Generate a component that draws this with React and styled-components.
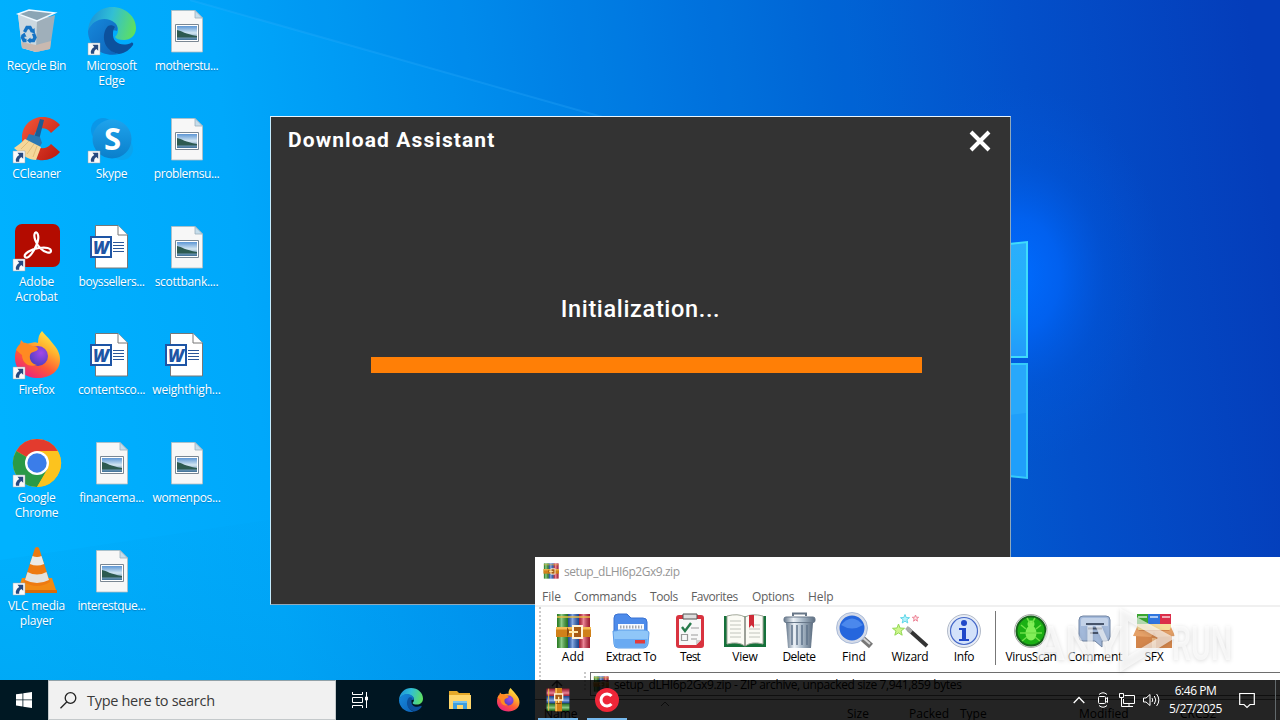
import React from 'react';
import styled, { createGlobalStyle } from 'styled-components';

const GlobalStyle = createGlobalStyle`
  * {
    box-sizing: border-box;
  }

  body {
    margin: 0;
    overflow: hidden;
    font-family: 'Open Sans', 'Noto Sans', sans-serif;
    font-size: 12px;
  }

  svg {
    display: block;
    flex-shrink: 0;
  }
`;

const Screen = styled.div`
  position: relative;
  width: 1280px;
  height: 720px;
  overflow: hidden;
  background: #0078d7;
`;

const Wallpaper = styled.svg`
  position: absolute;
  inset: 0;
`;

const IconGrid = styled.div`
  position: relative;
  display: grid;
  grid-auto-flow: column;
  grid-template-rows: repeat(6, 108px);
  grid-auto-columns: 75px;
  width: 225px;
  margin-left: -1px;
`;

const Shortcut = styled.div`
  display: flex;
  flex-direction: column;
  align-items: center;
  padding-top: 7px;
  color: #fff;
  text-align: center;
`;

const ShortcutLabel = styled.div`
  width: 74px;
  margin-top: 3px;
  line-height: 15px;
  letter-spacing: ${(props) => props.$spacing}px;
  white-space: nowrap;
  text-shadow: 0 1px 1px rgba(0, 40, 90, 0.3);
`;

const Dialog = styled.section`
  position: absolute;
  left: 270px;
  top: 116px;
  width: 741px;
  height: 489px;
  display: flex;
  flex-direction: column;
  align-items: center;
  background: #333;
  border: 1px solid #8fa9bb;
  border-top-color: #e9f6ff;
  border-left-color: #c5ecff;
  font-family: Roboto, sans-serif;
  color: #fff;
`;

const DialogHead = styled.header`
  width: 100%;
  height: 48px;
  padding: 0 19px 0 17px;
  display: flex;
  align-items: center;
  justify-content: space-between;
`;

const DialogTitle = styled.h1`
  margin: 0 0 2px;
  font-size: 21px;
  font-weight: 700;
  letter-spacing: 1.1px;
`;

const Status = styled.div`
  margin-top: 128px;
  height: 32px;
  line-height: 32px;
  font-size: 23.5px;
  font-weight: 500;
  letter-spacing: 0.65px;
`;

const Progress = styled.div`
  margin: 32px 0 0 12px;
  width: 551px;
  height: 16px;
  background: #ff7f06;
`;

const Archive = styled.section`
  position: absolute;
  left: 535px;
  top: 557px;
  width: 745px;
  height: 163px;
  overflow: hidden;
  background: #fff;
`;

const ArchiveTitle = styled.div`
  display: flex;
  align-items: center;
  gap: 5px;
  height: 30px;
  padding: 0 0 2px 8px;
  color: #969696;
  letter-spacing: -0.45px;
`;

const MenuBar = styled.div`
  display: flex;
  align-items: center;
  height: 20px;
  padding-left: 7px;
  color: #606060;
  border-bottom: 2px solid #f0f0f0;
`;

const MenuItem = styled.span`
  width: ${(props) => props.$w}px;
  letter-spacing: ${(props) => props.$spacing}px;
`;

const Toolbar = styled.div`
  display: flex;
  height: 65px;
  padding-left: 4px;
`;

const Grip = styled.div`
  width: 2px;
  height: ${(props) => props.$h}px;
  margin-right: ${(props) => props.$gap || 0}px;
  background: repeating-linear-gradient(#c9c9c9 0 2px, #fff 2px 4px);
`;

const Tool = styled.div`
  display: flex;
  flex-direction: column;
  align-items: center;
  width: ${(props) => props.$w}px;
  padding-top: 6px;
  color: #000;
  line-height: 16px;
  white-space: nowrap;
  letter-spacing: ${(props) => props.$spacing}px;
`;

const Divider = styled.div`
  width: 1px;
  height: 54px;
  margin: 4px 5px 0;
  background: #777;
`;

const AddressRow = styled.div`
  display: flex;
  height: 24px;
  padding-left: 15px;
`;

const Address = styled.div`
  flex: 1;
  display: flex;
  align-items: center;
  gap: 5px;
  margin-left: 4px;
  padding-left: 2px;
  border: 1px solid #6e6e6e;
  border-right: 0;
  color: #000;
  letter-spacing: -0.37px;
`;

const UpArrow = styled.svg`
  margin: 7px 20px 0 0;
`;

const Columns = styled.div`
  display: flex;
  align-items: center;
  position: relative;
  height: 24px;
  margin-top: 3px;
  padding: 4px 0 0 9px;
  border-top: 1px solid #777;
  color: #000;
  line-height: 16px;
`;

const Column = styled.span`
  width: ${(props) => props.$w}px;
  flex-shrink: 0;
`;

const SortMark = styled.svg`
  position: absolute;
  left: 125px;
  top: 1px;
`;

const Watermark = styled.svg`
  position: absolute;
  left: 1030px;
  top: 600px;
  filter: drop-shadow(0 1px 2px rgba(0, 0, 0, 0.22));
`;

const Taskbar = styled.footer`
  position: absolute;
  left: 0;
  top: 680px;
  width: 1280px;
  height: 40px;
  display: flex;
  background: rgba(0, 0, 0, 0.86);
  color: #fff;
`;

const StartButton = styled.div`
  width: 48px;
  display: flex;
  align-items: center;
  justify-content: center;
`;

const SearchBox = styled.div`
  width: 288px;
  display: flex;
  align-items: center;
  gap: 10px;
  padding-left: 11px;
  background: #f1f1f1;
  border: 1px solid #c4c9cb;
  border-top-color: #91a1a8;
  color: #3a3a3a;
  font-size: 14.5px;
  letter-spacing: -0.3px;
`;

const TaskButton = styled.div`
  width: ${(props) => props.$w}px;
  height: 40px;
  display: flex;
  align-items: center;
  justify-content: center;
  box-shadow: ${(props) => (props.$running ? 'inset 0 -2px #76b9ed' : 'none')};
  margin: ${(props) => (props.$running ? '0 5px 0 4px' : 0)};
`;

const Tray = styled.div`
  flex: 1;
  display: flex;
  align-items: center;
  justify-content: flex-end;
`;

const TrayIcon = styled.div`
  width: ${(props) => props.$w}px;
  display: flex;
  justify-content: center;
`;

const Clock = styled.div`
  width: 65px;
  text-align: center;
  line-height: 18px;
  letter-spacing: -0.45px;
`;

const ShowDesktop = styled.div`
  width: 5px;
  height: 40px;
  margin-left: 9px;
  border-left: 1px solid #62696c;
`;

/* ---------- desktop icons, all on a 48 x 48 grid ---------- */

const Icon48 = ({ size = 48, children, shortcut }) => (
  <svg width={size} height={size} viewBox="0 0 48 48" overflow="visible">
    {children}
    {shortcut && (
      <g>
        <path d="M0 36h12v12H0z" fill="#fafafa" stroke="#9aa7b2" strokeWidth=".5" />
        <path d="M4.500 37.800h5.700v6L8.300 42C6.500 43.300 6 44.600 6.200 46.800H3C2.200 44 3.600 41.500 6.300 39.900z" fill="#27497f" />
      </g>
    )}
  </svg>
);

const RecycleBin = () => (
  <Icon48>
    <path d="M5 8l35 2-4 32-13 3-14-4z" fill="#b9c9d4" />
    <path d="M5 8l19 6-1 31-14-4z" fill="#cbd8e0" />
    <path d="M24 14l18-6-5 34-14 3z" fill="#9fafba" />
    <path d="M8.500 35l14.500 3 15-4-1 8-14 3-14-4z" fill="#c9b9b0" />
    <path d="M5 7l11-4 26 3-18 8z" fill="#8aa5b5" stroke="#eef8ff" strokeWidth="1.4" />
    <path d="M11.500 25l2.500-4.500h3l2 3.500M20.500 26.500l1.500 4-1.500 3h-4M13.500 33.500h-2.500l-1.500-3 1-2.500" fill="none" stroke="#1573c4" strokeWidth="3.400" />
    <path d="M21.500 21l.5 5.500-5-1.500zM17.500 30.500v6l-3.500-3zM8 28.500l3.500-3 2 4.500z" fill="#1573c4" />
  </Icon48>
);

const EdgeArt = () => (
  <>
    <defs>
      <linearGradient id="edgeTop" x1="0" y1=".4" x2="1" y2=".6">
        <stop offset="0" stopColor="#1c94d8" />
        <stop offset=".45" stopColor="#31bfd5" />
        <stop offset="1" stopColor="#5fe05d" />
      </linearGradient>
      <linearGradient id="edgeBody" x1="0" y1="0" x2="1" y2="1">
        <stop offset="0" stopColor="#1689dc" />
        <stop offset="1" stopColor="#0d62b8" />
      </linearGradient>
    </defs>
    <path d="M0 24C1 9 12 0 24 0c14 0 24 10 24 21 0 8-6 12-12 12-5 0-8-1-9-3 4-4 4-9 0-13C20 10 6 12 0 24z" fill="url(#edgeTop)" />
    <path d="M0 24C5 11 19 9 27 16c3 3 3 6 2 8-8-3-12 4-11 10 1 7 6 12 13 13C14 51 0 39 0 24z" fill="url(#edgeBody)" />
    <path d="M20 19c-7 7-6 25 11 28 7-1 11-5 14-9 1-2-1-3-2-2-9 4-19 0-18-10 0-3 1-5 2-6-2-2-5-2-7-1z" fill="#0c519d" />
  </>
);

const CCleaner = () => (
  <Icon48 shortcut>
    <defs>
      <linearGradient id="ccRed" x1="0" y1="0" x2="1" y2="1">
        <stop offset="0" stopColor="#f4573a" />
        <stop offset="1" stopColor="#b9180f" />
      </linearGradient>
    </defs>
    <path d="M47 10C34-5 9 2 9 23c0 23 25 29 38 14l-9-8c-7 8-17 4-17-6 0-9 10-14 17-5z" fill="url(#ccRed)" />
    <path d="M27 4l4 1-5 20-5-2z" fill="#1d5c94" />
    <path d="M16 19l11 3 2 6-3 5-13-8z" fill="#2b78b3" />
    <path d="M12 24l16 8-5 13c-7 0-13-4-22-12 4-3 7-5 11-9z" fill="#f5d79a" />
    <path d="M8 34l8-8M14 39l7-10M20 42l4-11" stroke="#e3bd79" strokeWidth="1" />
  </Icon48>
);

const Skype = () => (
  <Icon48 shortcut>
    <defs>
      <linearGradient id="skypeBlue" x1="0" y1="0" x2="0" y2="1">
        <stop offset="0" stopColor="#1fa3ec" />
        <stop offset="1" stopColor="#0a7fcb" />
      </linearGradient>
    </defs>
    <circle cx="15" cy="15" r="12" fill="#0a97e8" />
    <circle cx="34" cy="34" r="11" fill="#0aa4ee" />
    <circle cx="24" cy="24" r="19.500" fill="url(#skypeBlue)" />
    <text x="24.500" y="34.500" textAnchor="middle" fontFamily="Open Sans" fontSize="31" fontWeight="700" fill="#fff">S</text>
  </Icon48>
);

const Acrobat = () => (
  <Icon48 shortcut>
    <rect x="2" y="1" width="45" height="43" rx="7" fill="#b30b00" />
    <path d="M12 34c-2-3 6-8 14-9 7-1 12 0 12 3s-6 2-11-3c-4-4-7-12-5-15 2-2 4 2 3 7-1 6-9 21-13 17z" fill="none" stroke="#fff" strokeWidth="2.200" />
  </Icon48>
);

const FirefoxArt = () => (
  <>
    <defs>
      <linearGradient id="foxBody" x1=".85" y1="0" x2=".25" y2="1">
        <stop offset="0" stopColor="#fff44f" />
        <stop offset=".35" stopColor="#ffb02e" />
        <stop offset=".65" stopColor="#ff5a36" />
        <stop offset="1" stopColor="#ea1f83" />
      </linearGradient>
      <radialGradient id="foxCore" cx=".65" cy=".35" r=".7">
        <stop offset="0" stopColor="#a447e8" />
        <stop offset="1" stopColor="#4b3fc0" />
      </radialGradient>
    </defs>
    <path d="M29 0c3 4 6 6 8 9l4 5c4 5 6 9 6 15 0 11-10 18-22 18C12 47 2 39 2 27c0-6 2-11 5-14l1-4 4 4 6-1c3-1 5-1 7 0C25 7 26 3 29 0z" fill="url(#foxBody)" />
    <circle cx="25" cy="25" r="10" fill="url(#foxCore)" />
    <path d="M3 19c2-5 6-8 10-7l6 3c3 0 6 1 6 3-1 3-7 2-8 6-1 5 2 9 7 10-9 3-15-3-15-10z" fill="#ff8a22" />
  </>
);

const Chrome = () => (
  <Icon48 shortcut>
    <circle cx="24" cy="24" r="24" fill="#fcc31e" />
    <path d="M24 24L3.200 12A24 24 0 0 1 44.800 12z" fill="#e33b2e" />
    <path d="M3.200 12A24 24 0 0 0 24 48l10.400-18L24 24z" fill="#2a9a47" />
    <path d="M24 12h20.800A24 24 0 0 1 24 48l11-18z" fill="#fcc31e" />
    <circle cx="24" cy="24" r="12" fill="#fff" />
    <circle cx="24" cy="24" r="9.700" fill="#3b7de9" />
  </Icon48>
);

const Vlc = () => (
  <Icon48 shortcut>
    <path d="M9 31h30l5 15H4z" fill="#f28a13" />
    <path d="M4 43h40v3H4z" fill="#d96b08" />
    <path d="M22 1q2-2 4 0l11 34q-13 8-26 0z" fill="#ee7a10" />
    <path d="M19.500 9q4.500 2 9 0l2.600 8q-7 3-14.200 0z" fill="#eceae6" />
    <path d="M14.500 25q9.500 5 19 0l2.500 8q-12 6-24 0z" fill="#e4e2dd" />
  </Icon48>
);

const PictureFile = () => (
  <Icon48>
    <defs>
      <linearGradient id="photoSky" x1="0" y1="0" x2="0" y2="1">
        <stop offset="0" stopColor="#5d96d4" />
        <stop offset=".5" stopColor="#d3e6f2" />
        <stop offset="1" stopColor="#3d6f96" />
      </linearGradient>
    </defs>
    <path d="M8.500 3.500H32L39.500 11v34h-31z" fill="#f7f7f7" stroke="#b5bcc0" strokeWidth=".8" />
    <path d="M32 3.500V11h7.500z" fill="#c6ddeb" stroke="#9db0bc" strokeWidth=".8" />
    <path d="M12.500 17.500h23v17h-23z" fill="#fff" stroke="#7a8793" />
    <path d="M14 19h20v14H14z" fill="url(#photoSky)" />
    <path d="M14 23c5 1 8 4 20 6v1.500H14z" fill="#2d5a50" />
  </Icon48>
);

const WordFile = () => (
  <Icon48>
    <g transform="translate(-1)">
      <path d="M8.500 2.500H31l9.500 9.500v33h-32z" fill="#fff" stroke="#777" />
      <path d="M31 2.500V12h9.500" fill="#fff" stroke="#777" />
      <path d="M26 19.500h11M26 22.500h11M26 25.500h11M26 28.500h11" stroke="#2a5699" />
      <path d="M4 14h20v20H4z" fill="#fff" stroke="#1e55a5" strokeWidth="2" />
      <text x="14" y="30.500" textAnchor="middle" fontFamily="Open Sans" fontSize="17" fontWeight="800" fontStyle="italic" fill="#1e55a5">W</text>
    </g>
  </Icon48>
);

/* ---------- archive window icons, 36 x 36 ---------- */

const Books = ({ size = 36, flat }) => (
  <svg width={size} height={size} viewBox="0 0 36 36">
    <defs>
      <linearGradient id="spine">
        <stop offset="0" stopColor="#000" stopOpacity=".25" />
        <stop offset=".4" stopColor="#fff" stopOpacity=".45" />
        <stop offset="1" stopColor="#000" stopOpacity=".3" />
      </linearGradient>
    </defs>
    <g transform={flat ? 'rotate(-90 18 18)' : undefined}>
      <path d="M2 1h11v34H2z" fill="#35a52c" />
      <path d="M13 1h11v34H13z" fill="#2864cc" />
      <path d="M24 1h11v34H24z" fill="#dd2745" />
      <path d="M2 1h11v34H2z" fill="url(#spine)" />
      <path d="M13 1h11v34H13z" fill="url(#spine)" />
      <path d="M24 1h11v34H24z" fill="url(#spine)" />
      <path d="M2 4h33" stroke="#e9bd48" strokeWidth="1.500" />
      <path d="M1 14h35v10H1z" fill="#d0811a" />
      <path d="M1 14h35v2.500H1z" fill="#f5bd55" />
      <path d="M12 14q4 5 0 10z" fill="#8c4a0c" />
      <path d="M18 13h9v12h-9z" fill="#a85b14" stroke="#fff3d6" strokeWidth="2" />
      <path d="M14 19h9" stroke="#ffe9a8" strokeWidth="2" />
    </g>
  </svg>
);

const Tool36 = ({ children }) => (
  <svg width="36" height="36" viewBox="0 0 36 36" overflow="visible">
    {children}
  </svg>
);

const ExtractIcon = () => (
  <Tool36>
    <path d="M1 5q0-4 4-4h9l4 4h12q4 0 4 4v9H1z" fill="#4d8bea" stroke="#3a72d2" />
    <path d="M5 11h26v11H5z" fill="#f7faff" />
    <path d="M7 14h22" stroke="#a5a8ae" strokeWidth="3" strokeDasharray="1.500 1.500" />
    <path d="M0 18q4 0 6-1h24q6 0 6 3l-1 11q-1 4-4 4H5q-4 0-4-4z" fill="#8fc6f8" stroke="#5a9ce8" />
    <path d="M1.500 26h33l-.5 5q-1 3.500-3.500 3.500H5q-3 0-3.500-3.500z" fill="#69aaf2" />
    <path d="M22 27h10v3.500H22z" fill="#e33b3b" />
  </Tool36>
);

const TestIcon = () => (
  <Tool36>
    <rect x="4" y="2" width="28" height="33" rx="3" fill="#d9333f" />
    <path d="M7 6h22v21l-5 5H7z" fill="#f8f8f8" />
    <path d="M24 32v-5h5z" fill="#cfcfcf" />
    <path d="M11 1h14v5H11z" fill="#ddd" stroke="#555" />
    <path d="M10 14l3 4 6-8" fill="none" stroke="#26794a" strokeWidth="2.400" />
    <path d="M9.500 21.500h6v6h-6zM19 15h8M19 22h7M19 26h6" fill="none" stroke="#999" strokeWidth="1.200" />
  </Tool36>
);

const ViewIcon = () => (
  <svg width="42" height="36" viewBox="0 0 42 36">
    <path d="M0 3h42v31H0z" fill="#16713a" />
    <path d="M3 3q11-3 18 1 7-4 18-1v28q-11-3-18 2-7-5-18-2z" fill="#fbfbf5" stroke="#a4a99c" />
    <path d="M21 4v29" stroke="#7d8278" strokeWidth="1.500" />
    <path d="M6 8h11M6 12h11M6 16h11M6 20h11M6 24h11M25 12h11M25 16h11M25 20h11M25 24h11" stroke="#c1c4bc" />
    <path d="M25 2h5v13l-2.500-3-2.500 3z" fill="#ce2b37" />
  </svg>
);

const DeleteIcon = () => (
  <Tool36>
    <defs>
      <linearGradient id="steel">
        <stop offset="0" stopColor="#66788c" />
        <stop offset=".3" stopColor="#edf2f7" />
        <stop offset=".6" stopColor="#a9b9c8" />
        <stop offset="1" stopColor="#5c6d80" />
      </linearGradient>
    </defs>
    <path d="M12 3V.500h13V3" fill="none" stroke="#687788" strokeWidth="2" />
    <path d="M5 10h27l-2 25H7z" fill="url(#steel)" />
    <path d="M11 12v20M16 12v20M21 12v20M26 12v20" stroke="#60748a" strokeWidth="1.500" />
    <rect x="3" y="4" width="31" height="5.500" rx="2" fill="url(#steel)" stroke="#677789" />
  </Tool36>
);

const FindIcon = () => (
  <Tool36>
    <path d="M26 25l9 8" stroke="#777" strokeWidth="6" />
    <path d="M26 24l8 7" stroke="#d5d5d5" strokeWidth="2" />
    <circle cx="16" cy="15" r="14" fill="#2566dd" stroke="#d5dbe8" strokeWidth="3" />
    <path d="M5 12q11-13 22 0-11 7-22 0z" fill="#79b2ff" opacity=".45" />
    <circle cx="16" cy="15" r="15.500" fill="none" stroke="#9cb0d2" strokeWidth=".8" />
  </Tool36>
);

const WizardIcon = () => (
  <Tool36>
    <path d="M16 16l19 17" stroke="#333" strokeWidth="4" />
    <path d="M14.500 14.500l5 4.500" stroke="#aaa" strokeWidth="4" />
    <path d="M6.500 11l1.500 4 4.500.3-3.500 2.700 1.200 4.200-3.700-2.300-3.700 2.300L4 18 .5 15.300 5 15z" fill="#cdf58c" stroke="#94d955" />
    <path d="M13 1.500l1.200 3 3.300.2-2.600 2 .9 3.300-2.800-1.900-2.800 1.900.9-3.300-2.600-2 3.300-.2z" fill="#b5f2fb" stroke="#5fd6e8" />
    <path d="M23.500 2l.8 2.200 2.400.1-1.900 1.500.7 2.400-2-1.400-2 1.400.7-2.400-1.900-1.500 2.400-.1z" fill="#ffe2e7" stroke="#ed8597" />
  </Tool36>
);

const InfoIcon = () => (
  <Tool36>
    <circle cx="18" cy="18" r="16.500" fill="#e8edf6" stroke="#b3bbc9" strokeWidth="1" />
    <circle cx="18" cy="18" r="13.500" fill="#d3e2fa" stroke="#4568c8" strokeWidth="1.200" />
    <circle cx="18" cy="10" r="3" fill="#2048c9" />
    <path d="M13 15h7v11h3v2H13v-2h3v-9h-3z" fill="#2048c9" />
  </Tool36>
);

const VirusIcon = () => (
  <Tool36>
    <circle cx="18" cy="18" r="16.500" fill="#eee" stroke="#aaa" />
    <circle cx="18" cy="18" r="14.500" fill="#1bb014" stroke="#16651a" strokeWidth="2" />
    <ellipse cx="18" cy="20" rx="5.500" ry="7.500" fill="#81ee58" />
    <circle cx="18" cy="11" r="3.500" fill="#81ee58" />
    <path d="M8 12l5 4m10 0l5-4M7 20h22M9 28l5-4m8 0l5 4M14 5l3 5m5-5l-3 5" stroke="#6fe048" strokeWidth="1.500" />
  </Tool36>
);

const CommentIcon = () => (
  <Tool36>
    <path d="M6 3h23q4 0 4 4v17q0 4-4 4h-4v6l-7-6H6q-4 0-4-4V7q0-4 4-4z" fill="#a3b9da" stroke="#7286a4" />
    <path d="M6 5h23q2 0 2 2v6H4V7q0-2 2-2z" fill="#c3d2e8" />
    <path d="M9 11h18M11 15.500h14M13 20h8" stroke="#49566c" strokeWidth="2" />
  </Tool36>
);

const SfxIcon = () => (
  <svg width="42" height="36" viewBox="0 0 42 36">
    <path d="M4 1h11v13H4z" fill="#39a630" />
    <path d="M15 1h12v13H15z" fill="#2f75de" />
    <path d="M27 1h11v13H27z" fill="#db2d49" />
    <path d="M5 4h9M17 4h8M29 4h8" stroke="#fff" strokeOpacity=".6" strokeWidth="2" />
    <path d="M4 11h34v7H4z" fill="#f5dc9a" />
    <path d="M3 17h36v18H3z" fill="#d3864c" />
    <path d="M4 14l-4 9 18 1 3-5 3 5 18-1-4-9-2 4H6z" fill="#e5a168" />
    <path d="M19 25h4v10h-4z" fill="#e9b27c" />
  </svg>
);

const Folder = () => (
  <svg width="24" height="24" viewBox="0 0 24 24">
    <path d="M1 3h8l2 2h11v16H1z" fill="#e5a929" />
    <path d="M1 7h22v14H1z" fill="#ffd66b" />
    <path d="M5 13h14v8h-4v-4H9v4H5z" fill="#3f9fdf" />
    <path d="M5 13h14v2H5z" fill="#78c3ef" />
  </svg>
);

const shortcuts = [
  { label: 'Recycle Bin', spacing: -0.3, icon: <RecycleBin /> },
  { label: 'CCleaner', spacing: -0.25, icon: <CCleaner /> },
  { label: ['Adobe', 'Acrobat'], spacing: -0.2, icon: <Acrobat /> },
  { label: 'Firefox', spacing: -0.35, icon: <Icon48 shortcut><FirefoxArt /></Icon48> },
  { label: ['Google', 'Chrome'], spacing: -0.2, icon: <Chrome /> },
  { label: ['VLC media', 'player'], spacing: -0.2, icon: <Vlc /> },
  { label: ['Microsoft', 'Edge'], spacing: -0.25, icon: <Icon48 shortcut><EdgeArt /></Icon48> },
  { label: 'Skype', spacing: -0.3, icon: <Skype /> },
  { label: 'boyssellers...', spacing: -0.4, icon: <WordFile /> },
  { label: 'contentsco...', spacing: -0.3, icon: <WordFile /> },
  { label: 'financema...', spacing: -0.3, icon: <PictureFile /> },
  { label: 'interestque...', spacing: -0.42, icon: <PictureFile /> },
  { label: 'motherstu...', spacing: -0.4, icon: <PictureFile /> },
  { label: 'problemsu...', spacing: -0.4, icon: <PictureFile /> },
  { label: 'scottbank....', spacing: -0.3, icon: <PictureFile /> },
  { label: 'weighthigh...', spacing: -0.2, icon: <WordFile /> },
  { label: 'womenpos...', spacing: -0.3, icon: <PictureFile /> },
];

const menus = [
  ['File', 32, 0],
  ['Commands', 76, -0.2],
  ['Tools', 41, -0.4],
  ['Favorites', 61, -0.45],
  ['Options', 56, -0.3],
  ['Help', 40, -0.1],
];

const tools = [
  ['Add', 54, 0, <Books />],
  ['Extract To', 62, -0.55, <ExtractIcon />],
  ['Test', 56, -0.8, <TestIcon />],
  ['View', 54, -0.2, <ViewIcon />],
  ['Delete', 54, -0.5, <DeleteIcon />],
  ['Find', 56, 0, <FindIcon />],
  ['Wizard', 56, -0.3, <WizardIcon />],
  ['Info', 52, -0.4, <InfoIcon />],
  null,
  ['VirusScan', 60, -0.4, <VirusIcon />],
  ['Comment', 68, -0.1, <CommentIcon />],
  ['SFX', 50, -0.3, <SfxIcon />],
];

const Background = () => (
  <Wallpaper width="1280" height="720" viewBox="0 0 1280 720">
    <defs>
      <linearGradient id="sky" gradientUnits="userSpaceOnUse" x1="0" y1="420" x2="1280" y2="260">
        <stop offset="0" stopColor="#00b2ff" />
        <stop offset=".2" stopColor="#00a8fb" />
        <stop offset=".38" stopColor="#0090ef" />
        <stop offset=".6" stopColor="#0070dc" />
        <stop offset=".82" stopColor="#0350ca" />
        <stop offset="1" stopColor="#043dba" />
      </linearGradient>
      <radialGradient id="glow" gradientUnits="userSpaceOnUse" cx="0" cy="0" r="1" gradientTransform="translate(1015 275) scale(150 190)">
        <stop offset="0" stopColor="#006cff" />
        <stop offset=".3" stopColor="#0066fb" stopOpacity=".75" />
        <stop offset=".6" stopColor="#005ce8" stopOpacity=".3" />
        <stop offset="1" stopColor="#0058dc" stopOpacity="0" />
      </radialGradient>
      <linearGradient id="pane" x1="0" y1="0" x2="0" y2="1">
        <stop offset="0" stopColor="#2baefc" />
        <stop offset=".6" stopColor="#1fb2fa" />
        <stop offset="1" stopColor="#2499fa" />
      </linearGradient>
      <linearGradient id="floor" x1="0" y1="0" x2="0" y2="1">
        <stop offset="0" stopColor="#0090dc" stopOpacity="0" />
        <stop offset="1" stopColor="#0090dc" stopOpacity=".3" />
      </linearGradient>
    </defs>
    <path d="M0 0h1280v720H0z" fill="url(#sky)" />
    <path d="M0 560L535 480V720H0z" fill="url(#floor)" />
    <path d="M190 0L620 122 900 200V0z" fill="#0068d8" opacity=".07" />
    <path d="M190 0L620 122" stroke="#3bb6ff" strokeWidth="2" opacity=".22" />
    <path d="M800 60h480v480H800z" fill="url(#glow)" />
    <path d="M1000 245l27-3v115h-27z" fill="url(#pane)" stroke="#40dcfb" strokeWidth="2" />
    <path d="M1000 364h27v114l-27-3z" fill="#209ffa" stroke="#35cbfa" strokeWidth="2" />
    <path d="M1000 365h26v48l-26 3z" fill="#30b2fb" opacity=".5" />
  </Wallpaper>
);

const DownloadDialog = () => (
  <Dialog>
    <DialogHead>
      <DialogTitle>Download Assistant</DialogTitle>
      <svg width="22" height="22" viewBox="0 0 22 22">
        <path d="M2 2l18 18M20 2L2 20" stroke="#fff" strokeWidth="4" />
      </svg>
    </DialogHead>
    <Status>Initialization...</Status>
    <Progress />
  </Dialog>
);

const ArchiveWindow = () => (
  <Archive>
    <ArchiveTitle>
      <Books size={16} />
      setup_dLHI6p2Gx9.zip
    </ArchiveTitle>
    <MenuBar>
      {menus.map(([name, w, spacing]) => (
        <MenuItem key={name} $w={w} $spacing={spacing}>{name}</MenuItem>
      ))}
    </MenuBar>
    <Toolbar>
      <Grip $h={73} $gap={5} />
      {tools.map((tool, i) => {
        if (!tool) return <Divider key={i} />;
        const [name, w, spacing, icon] = tool;
        return (
          <Tool key={name} $w={w} $spacing={spacing}>
            {icon}
            {name}
          </Tool>
        );
      })}
    </Toolbar>
    <AddressRow>
      <UpArrow width="14" height="14" viewBox="0 0 14 14">
        <path d="M7 13V2M2 7l5-5 5 5" fill="none" stroke="#444" strokeWidth="1.500" />
      </UpArrow>
      <Grip $h={20} />
      <Address>
        <Books size={16} />
        setup_dLHI6p2Gx9.zip - ZIP archive, unpacked size 7,941,859 bytes
      </Address>
    </AddressRow>
    <Columns>
      <Column $w={303}>Name</Column>
      <Column $w={62}>Size</Column>
      <Column $w={51}>Packed</Column>
      <Column $w={119}>Type</Column>
      <Column $w={101}>Modified</Column>
      <Column $w={60}>CRC32</Column>
      <SortMark width="10" height="6" viewBox="0 0 10 6">
        <path d="M1 5l4-4 4 4" fill="none" stroke="#555" />
      </SortMark>
    </Columns>
  </Archive>
);

const AnyRun = () => (
  <Watermark width="210" height="80" viewBox="0 0 210 80">
    <g fill="#fff" fillOpacity=".62" fontFamily="Roboto" fontSize="49" fontWeight="500">
      <text x="6" y="60" textLength="86" lengthAdjust="spacingAndGlyphs">ANY</text>
      <text x="142" y="60" textLength="60" lengthAdjust="spacingAndGlyphs">RUN</text>
      <path fillRule="evenodd" d="M90 8l55 30-55 34zM98 21v35l30-18z" />
    </g>
  </Watermark>
);

const BottomBar = () => (
  <Taskbar>
    <StartButton>
      <svg width="16" height="16" viewBox="0 0 16 16" fill="#fff">
        <path d="M0 2.300l6.500-.9v6.100H0zM7.300 1.300L16 0v7.500H7.300zM0 8.300h6.500v6.200L0 13.600zM7.300 8.300H16V16l-8.700-1.300z" />
      </svg>
    </StartButton>
    <SearchBox>
      <svg width="17" height="17" viewBox="0 0 17 17" fill="none" stroke="#222" strokeWidth="1.300">
        <circle cx="10.500" cy="6" r="5.300" />
        <path d="M6.700 10L.500 16.200" />
      </svg>
      Type here to search
    </SearchBox>
    <TaskButton $w={48}>
      <svg width="18" height="16" viewBox="0 0 18 16" fill="none" stroke="#fff">
        <path d="M1.500 0v2.500h10V0M1.500 5.500h10v5h-10zM1.500 16v-2.500h10V16M15.500 0v16" />
        <path d="M14.500 5h2v3h-2z" fill="#fff" />
      </svg>
    </TaskButton>
    <TaskButton $w={54}>
      <Icon48 size={24}><EdgeArt /></Icon48>
    </TaskButton>
    <TaskButton $w={44}>
      <Folder />
    </TaskButton>
    <TaskButton $w={52}>
      <Icon48 size={24}><FirefoxArt /></Icon48>
    </TaskButton>
    <TaskButton $w={40} $running>
      <Books size={24} flat />
    </TaskButton>
    <TaskButton $w={40} $running>
      <svg width="24" height="24" viewBox="0 0 24 24">
        <circle cx="12" cy="12" r="12" fill="#ee2638" />
        <path d="M16.500 8a6 6 0 1 0 0 8" fill="none" stroke="#fff" strokeWidth="3" />
      </svg>
    </TaskButton>
    <Tray>
      <TrayIcon $w={24}>
        <svg width="12" height="8" viewBox="0 0 12 8">
          <path d="M.700 7L6 1.500 11.300 7" fill="none" stroke="#fff" strokeWidth="1.300" />
        </svg>
      </TrayIcon>
      <TrayIcon $w={24}>
        <svg width="12" height="16" viewBox="0 0 12 16" fill="none" stroke="#fff">
          <rect x="1.500" y="4.500" width="7" height="7" rx="1" />
          <path d="M8.500 7l2-1.500v5l-2-1.500M2 2.500q4-3.500 8 0M2 13.500q4 3.500 8 0" />
        </svg>
      </TrayIcon>
      <TrayIcon $w={24}>
        <svg width="16" height="15" viewBox="0 0 16 15" fill="none" stroke="#fff">
          <path d="M5.500 2.500h10v8h-11V6M10 10.500v3M6 13.500h8M.500.500h4v4h-4zM2.500 4.500v9H6" />
        </svg>
      </TrayIcon>
      <TrayIcon $w={24}>
        <svg width="17" height="14" viewBox="0 0 17 14" fill="none" stroke="#fff">
          <path d="M.500 5v4h2.500l4 3.500v-11L3 5zM9 5q1.500 2 0 4M11.300 3q3 4 0 8M13.600 1q4.500 6 0 12" />
        </svg>
      </TrayIcon>
      <Clock>
        6:46 PM
        <br />
        5/27/2025
      </Clock>
      <TrayIcon $w={38}>
        <svg width="16" height="17" viewBox="0 0 16 17" fill="none" stroke="#fff" strokeWidth="1.200">
          <path d="M.700 1.500h14.600v11H11L8 15.500l-3-3H.700z" />
        </svg>
      </TrayIcon>
      <ShowDesktop />
    </Tray>
  </Taskbar>
);

const App = () => (
  <Screen>
    <GlobalStyle />
    <Background />
    <IconGrid>
      {shortcuts.map(({ label, spacing, icon }) => (
        <Shortcut key={label}>
          {icon}
          <ShortcutLabel $spacing={spacing}>
            {[].concat(label).map((line) => (
              <div key={line}>{line}</div>
            ))}
          </ShortcutLabel>
        </Shortcut>
      ))}
    </IconGrid>
    <DownloadDialog />
    <ArchiveWindow />
    <AnyRun />
    <BottomBar />
  </Screen>
);

export default App;
